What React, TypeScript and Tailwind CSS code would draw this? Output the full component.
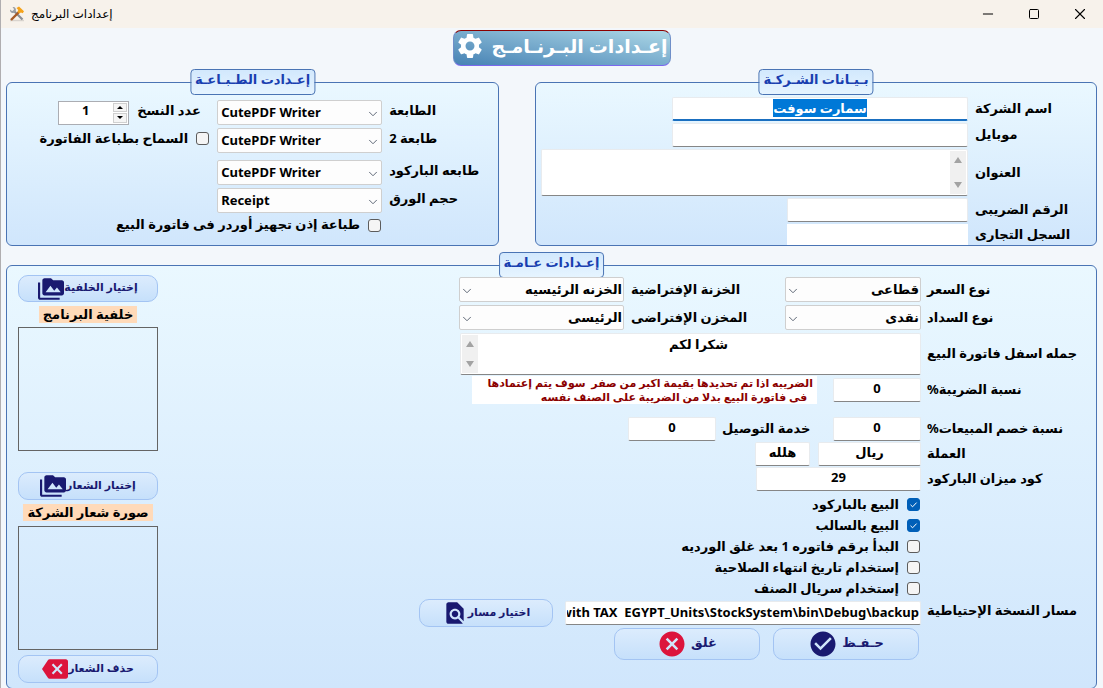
import { useEffect, useRef } from "react";
import type { ReactNode } from "react";
import { ChevronDown, Minus, Square, X } from "lucide-react";
import {
  MdBackspace,
  MdCancel,
  MdCheckCircle,
  MdFindInPage,
  MdPermMedia,
  MdSettings,
} from "react-icons/md";
import clsx from "clsx";

const fieldStyle =
  "min-w-0 rounded-xs border border-[#e8ebee] border-b-[#868686] bg-white px-1 text-center outline-none";

interface PanelProps {
  title: string;
  className?: string;
  children: ReactNode;
}

function Panel({ title, className, children }: PanelProps) {
  return (
    <section
      className={clsx(
        "relative rounded-md border border-[#4a74b4] bg-linear-to-b from-[#eaf8ff] to-[#d0e6fc]",
        className
      )}
    >
      <h2 className="absolute -top-3.5 left-1/2 flex h-[26px] -translate-x-1/2 items-center rounded-sm border border-[#4a74b4] bg-linear-to-b from-[#d2e8fd] to-[#e6f4ff] px-1 pb-1 text-[13px] whitespace-nowrap text-[#1a3fb0]">
        {title}
      </h2>
      {children}
    </section>
  );
}

interface LabelProps {
  htmlFor: string;
  className?: string;
  children: ReactNode;
}

// Labels hug the field on their left
function Label({ htmlFor, className, children }: LabelProps) {
  return (
    <label
      htmlFor={htmlFor}
      className={clsx("shrink-0 text-left whitespace-nowrap", className)}
    >
      {children}
    </label>
  );
}

interface FieldProps {
  id: string;
  value?: string;
  className?: string;
}

function TextField({ id, value = "", className }: FieldProps) {
  return (
    <input
      id={id}
      type="text"
      defaultValue={value}
      className={clsx(fieldStyle, "h-6 pb-1", className)}
    />
  );
}

interface SelectProps {
  id: string;
  value: string;
  ltr?: boolean;
  className?: string;
}

function Select({ id, value, ltr, className }: SelectProps) {
  return (
    <div className={clsx("relative shrink-0", className)}>
      <select
        id={id}
        dir={ltr ? "ltr" : "rtl"}
        className={clsx(
          "block h-[25px] w-full appearance-none rounded-xs border border-[#cfcfcf] bg-[#fdfdfd] outline-none",
          ltr ? "px-[3px]" : "px-px"
        )}
      >
        <option>{value}</option>
      </select>
      <ChevronDown
        className={clsx(
          "pointer-events-none absolute top-[7px] h-3.5 w-3.5 text-gray-600",
          ltr ? "right-0.5" : "left-px"
        )}
        strokeWidth={1.5}
      />
    </div>
  );
}

interface TextAreaProps {
  id: string;
  value?: string;
  barOnRight?: boolean;
  className?: string;
}

function TextArea({ id, value = "", barOnRight, className }: TextAreaProps) {
  return (
    <div
      className={clsx(
        "flex rounded-xs border border-[#e8ebee] border-b-[#868686] bg-white p-px",
        barOnRight && "flex-row-reverse",
        className
      )}
    >
      <textarea
        id={id}
        defaultValue={value}
        className="min-w-0 flex-1 resize-none overflow-hidden bg-transparent text-center outline-none"
      />
      <div className="flex w-4 flex-col items-center justify-between bg-[#f0f0f0] py-1.5">
        <span className="border-x-[4px] border-b-[6px] border-x-transparent border-b-[#a3a3a3]" />
        <span className="border-x-[4px] border-t-[6px] border-x-transparent border-t-[#a3a3a3]" />
      </div>
    </div>
  );
}

interface CheckFieldProps {
  label: string;
  checked?: boolean;
  className?: string;
}

function CheckField({ label, checked, className }: CheckFieldProps) {
  return (
    <label className={clsx("flex items-center gap-2 whitespace-nowrap", className)}>
      <span className="relative flex">
        <input
          type="checkbox"
          defaultChecked={checked}
          className="peer h-[13px] w-[13px] appearance-none rounded-[3px] border border-[#5c5c5c] bg-[#f5f5f5] checked:border-[#005fb8] checked:bg-[#005fb8]"
        />
        <svg
          viewBox="0 0 13 13"
          className="pointer-events-none absolute inset-0 hidden h-[13px] w-[13px] fill-none stroke-white peer-checked:block"
        >
          <path d="M3.5 6.8 5.6 8.8 9.6 4.6" />
        </svg>
      </span>
      {label}
    </label>
  );
}

interface ActionButtonProps {
  label: string;
  icon: ReactNode;
  className?: string;
}

function ActionButton({ label, icon, className }: ActionButtonProps) {
  return (
    <button
      type="button"
      className={clsx(
        "flex shrink-0 items-center justify-center rounded-[10px] border border-[#a3c4f3] bg-linear-to-b from-[#dcecfd] to-[#c6e0fb] whitespace-nowrap text-[#191970]",
        className
      )}
    >
      <span className="pb-0.5">{label}</span>
      {icon}
    </button>
  );
}

function ToolsIcon() {
  return (
    <svg viewBox="0 0 16 16" className="h-4 w-4">
      <path d="M1 14.5h14" stroke="#d9d4ce" strokeWidth="1.5" />
      <path d="m4.5 4.500 9 9" stroke="#8b8f94" strokeWidth="2.200" />
      <path
        d="M1 3.500 3 5l1.500-.5L5 3 3.500 1C6 .5 7.500 2.500 6.800 4.800L4.800 6.800C2.500 7.500.8 6 1 3.500Z"
        fill="#9a9ea3"
      />
      <path d="m10 6-8 8" stroke="#a65a25" strokeWidth="2.400" />
      <path d="M7.500 2 10 .5l5 4.700-1.300 2-1.700-.7-2 1-1.500-2 .8-1.500Z" fill="#f5a31a" />
    </svg>
  );
}

function TitleBar() {
  return (
    <header
      dir="ltr"
      className="flex h-7 items-center justify-between bg-[#f7f2eb] pl-2 text-xs font-normal"
    >
      <div className="flex items-center gap-1.5">
        <ToolsIcon />
        <span dir="rtl">إعدادات البرنامج</span>
      </div>
      <div className="flex">
        <button type="button" aria-label="تصغير" className="flex w-[46px] items-center justify-center">
          <Minus className="h-4 w-4" strokeWidth={1.5} />
        </button>
        <button type="button" aria-label="تكبير" className="flex w-[46px] items-center justify-center">
          <Square className="h-3 w-3" strokeWidth={2} />
        </button>
        <button type="button" aria-label="إغلاق" className="flex w-[46px] items-center justify-center">
          <X className="h-[18px] w-[18px]" strokeWidth={1.5} />
        </button>
      </div>
    </header>
  );
}

function CompanyPanel() {
  const nameRef = useRef<HTMLInputElement>(null);

  // The company name is focused and selected when the window opens
  useEffect(() => {
    nameRef.current?.focus();
    nameRef.current?.select();
  }, []);

  return (
    <Panel title="بـيـانات الشـركـة" className="flex-[562]">
      <div className="grid grid-cols-[121px_1fr] items-center gap-x-[7px] gap-y-0.5 pt-3.5 pl-[5px]">
        <Label htmlFor="name">اسم الشركة</Label>
        <input
          id="name"
          ref={nameRef}
          type="text"
          defaultValue="سمارت سوفت"
          className="h-6 w-[296px] rounded-xs border border-b-2 border-[#e8ebee] border-b-[#1a6fc0] bg-white pb-0.5 text-center outline-none selection:bg-[#0078d7] selection:text-white"
        />
        <Label htmlFor="mobile">موبايل</Label>
        <TextField id="mobile" className="w-[296px]" />
        <Label htmlFor="address">العنوان</Label>
        <TextArea id="address" barOnRight className="h-[47px]" />
        <Label htmlFor="tax-number">الرقم الضريبى</Label>
        <TextField id="tax-number" className="w-[181px]" />
        <Label htmlFor="registry">السجل التجارى</Label>
        <input
          id="registry"
          type="text"
          className="h-[21px] w-[181px] bg-white px-1 text-center outline-none"
        />
      </div>
    </Panel>
  );
}

function PrintPanel() {
  return (
    <Panel title="إعـدادت الطـبـاعـة" className="flex-[493]">
      <div className="flex flex-col gap-[3px] pt-[17px]">
        <div className="flex items-center">
          <Label htmlFor="printer" className="w-[109px] pb-1">الطابعة</Label>
          <Select id="printer" value="CutePDF Writer" ltr className="mr-[7px] w-[165px]" />
          <Label htmlFor="copies" className="mr-3 w-[68px] pb-1">عدد النسخ</Label>
          <div className="mr-2 flex h-6 w-[71px] border border-[#abadb3] bg-white">
            <div className="flex w-4 flex-col gap-px p-px">
              <button
                type="button"
                aria-label="زيادة"
                className="flex flex-1 items-center justify-center border border-[#d0d0d0] bg-[#f5f5f5]"
              >
                <span className="border-x-[3px] border-b-[3px] border-x-transparent border-b-black" />
              </button>
              <button
                type="button"
                aria-label="نقص"
                className="flex flex-1 items-center justify-center border border-[#d0d0d0] bg-[#f5f5f5]"
              >
                <span className="border-x-[3px] border-t-[3px] border-x-transparent border-t-black" />
              </button>
            </div>
            <input
              id="copies"
              type="text"
              defaultValue="1"
              className="min-w-0 flex-1 pb-1 text-center outline-none"
            />
          </div>
        </div>
        <div className="flex items-center">
          <Label htmlFor="printer2" className="w-[109px] pb-1">طابعة 2</Label>
          <Select id="printer2" value="CutePDF Writer" ltr className="mr-[7px] w-[165px]" />
          <CheckField label="السماح بطباعة الفاتورة" className="mr-2 pb-1" />
        </div>
        <div className="mt-1 flex items-center">
          <Label htmlFor="barcode-printer" className="w-[109px] pb-1">طابعه الباركود</Label>
          <Select id="barcode-printer" value="CutePDF Writer" ltr className="mr-[7px] w-[165px]" />
        </div>
        <div className="flex items-center">
          <Label htmlFor="paper" className="w-[109px] pb-1">حجم الورق</Label>
          <Select id="paper" value="Receipt" ltr className="mr-[7px] w-[165px]" />
        </div>
        <CheckField label="طباعة إذن تجهيز أوردر فى فاتورة البيع" className="mr-[117px] h-4.5" />
      </div>
    </Panel>
  );
}

function ImagesColumn() {
  return (
    <aside className="-mt-0.5 flex w-[140px] shrink-0 flex-col items-center">
      <ActionButton
        label="إختيار الخلفية"
        icon={<MdPermMedia className="h-[26px] w-[26px]" />}
        className="h-[27px] w-full text-[11px]"
      />
      <div className="mt-1 bg-[#ffdab9] px-1 leading-[17px]">خلفية البرنامج</div>
      <div className="mt-1 h-[124px] w-full border border-[#646464]" />
      <ActionButton
        label="إختيار الشعار"
        icon={<MdPermMedia className="h-[26px] w-[26px]" />}
        className="mt-[21px] h-7 w-full text-[11px]"
      />
      <div className="mt-1 bg-[#ffdab9] px-1 leading-[17px]">صورة شعار الشركة</div>
      <div className="mt-[5px] h-[124px] w-full border border-[#646464]" />
      <ActionButton
        label="حذف الشعار"
        icon={<MdBackspace className="h-[26px] w-[26px] text-[#dc143c]" />}
        className="mt-[5px] h-7 w-full text-[11px]"
      />
    </aside>
  );
}

function GeneralPanel() {
  return (
    <Panel title="إعـدادات عـامـة" className="mt-[19px] flex min-h-[424px] justify-between pt-[11px] pl-[11px]">
      <form className="flex flex-col gap-[3px]">
        <div className="flex items-center">
          <Label htmlFor="price-type" className="w-[169px]">نوع السعر</Label>
          <Select id="price-type" value="قطاعى" className="mr-1.5 w-[136px]" />
          <Label htmlFor="treasury" className="w-[154px]">الخزنة الإفتراضية</Label>
          <Select id="treasury" value="الخزنه الرئيسيه" className="mr-[7px] w-[165px]" />
        </div>
        <div className="flex items-center">
          <Label htmlFor="payment-type" className="w-[169px]">نوع السداد</Label>
          <Select id="payment-type" value="نقدى" className="mr-1.5 w-[136px]" />
          <Label htmlFor="store" className="w-[154px]">المخزن الإفتراضى</Label>
          <Select id="store" value="الرئيسى" className="mr-[7px] w-[165px]" />
        </div>
        <div className="flex items-center">
          <Label htmlFor="footer-text" className="w-[169px]">جمله اسفل فاتورة البيع</Label>
          <TextArea id="footer-text" value="شكرا لكم" className="mr-1.5 h-[42px] w-[461px]" />
        </div>
        <div className="flex h-6 items-center">
          <Label htmlFor="tax" className="w-[169px]">نسبة الضريبة%</Label>
          <TextField id="tax" value="0" className="mr-1.5 w-[88px]" />
          <p className="mr-4 w-[345px] bg-white px-1 text-[11px]/[14px] whitespace-pre text-[#8b0000]">
            {"الضريبه اذا تم تحديدها بقيمة اكبر من صفر  سوف يتم إعتمادها\n  فى فاتورة البيع بدلا من الضريبة على الصنف نفسه"}
          </p>
        </div>
        <div className="mt-3 flex items-center">
          <Label htmlFor="discount" className="w-[169px]">نسبة خصم المبيعات%</Label>
          <TextField id="discount" value="0" className="mr-1.5 w-[88px]" />
          <Label htmlFor="delivery" className="w-[111px]">خدمة التوصيل</Label>
          <TextField id="delivery" value="0" className="mr-1.5 w-[88px]" />
        </div>
        <div className="-mt-0.5 flex items-center">
          <Label htmlFor="currency" className="w-[169px]">العملة</Label>
          <TextField id="currency" value="ريال" className="mr-1.5 w-[103px]" />
          <input
            aria-label="كسر العملة"
            type="text"
            defaultValue="هلله"
            className={clsx(fieldStyle, "mr-2 h-6 w-[55px] pb-1")}
          />
        </div>
        <div className="-mt-0.5 flex items-center">
          <Label htmlFor="scale-code" className="w-[169px]">كود ميزان الباركود</Label>
          <TextField id="scale-code" value="29" className="mr-1.5 w-[165px]" />
        </div>
        <div className="mr-44 flex flex-col">
          <CheckField label="البيع بالباركود" checked className="h-[21px]" />
          <CheckField label="البيع بالسالب" checked className="h-[21px]" />
          <CheckField label="البدأ برقم فاتوره 1 بعد غلق الورديه" className="h-[21px]" />
          <CheckField label="إستخدام تاريخ انتهاء الصلاحية" className="h-[21px]" />
          <CheckField label="إستخدام سريال الصنف" className="h-[21px]" />
        </div>
        <div className="-mt-px flex h-6 items-center">
          <Label htmlFor="backup-path" className="w-[169px] pb-1">مسار النسخة الإحتياطية</Label>
          <input
            id="backup-path"
            type="text"
            defaultValue="with TAX  EGYPT_Units\StockSystem\bin\Debug\backup"
            className="mr-1.5 h-6 w-[356px] rounded-xs border border-[#e8ebee] border-b-[#868686] bg-white px-px pb-0.5 text-right outline-none"
          />
          <ActionButton
            label="اختيار مسار"
            icon={<MdFindInPage className="h-[26px] w-[26px]" />}
            className="mr-3 h-7 w-[134px] text-[11px]"
          />
        </div>
        <div className="mr-[177px] flex gap-[13px]">
          <ActionButton
            label="حـفـظ"
            icon={<MdCheckCircle className="mr-1 h-[30px] w-[30px]" />}
            className="h-8 w-[146px] text-[13px]"
          />
          <ActionButton
            label="غلق"
            icon={<MdCancel className="mr-1 h-[30px] w-[30px] text-[#dc143c]" />}
            className="h-8 w-[146px] text-[13px]"
          />
        </div>
      </form>
      <ImagesColumn />
    </Panel>
  );
}

export default function App() {
  return (
    <div
      dir="rtl"
      className="h-screen overflow-hidden border-l border-[#b0aeb0] bg-[#f3f7fb] font-['Noto_Sans','DejaVu_Sans',sans-serif] text-[13px] font-bold text-black"
    >
      <TitleBar />
      <main className="pr-1.5 pl-[5px]">
        <div className="flex justify-center pt-0.5 pl-5">
          <h1 className="flex h-9 w-[218px] items-center justify-center gap-1.5 rounded-lg border border-x-[#6f8fc8] border-t-[#8b0000] border-b-[#7b68ee] bg-linear-to-tr from-[#4682b4] to-[#add8e6] pb-1 text-[19px] whitespace-nowrap text-white">
            إعـدادات البـرنـامـج
            <MdSettings className="h-[30px] w-[30px] shrink-0" />
          </h1>
        </div>
        <div className="mt-4 flex gap-9">
          <CompanyPanel />
          <PrintPanel />
        </div>
        <GeneralPanel />
      </main>
    </div>
  );
}
